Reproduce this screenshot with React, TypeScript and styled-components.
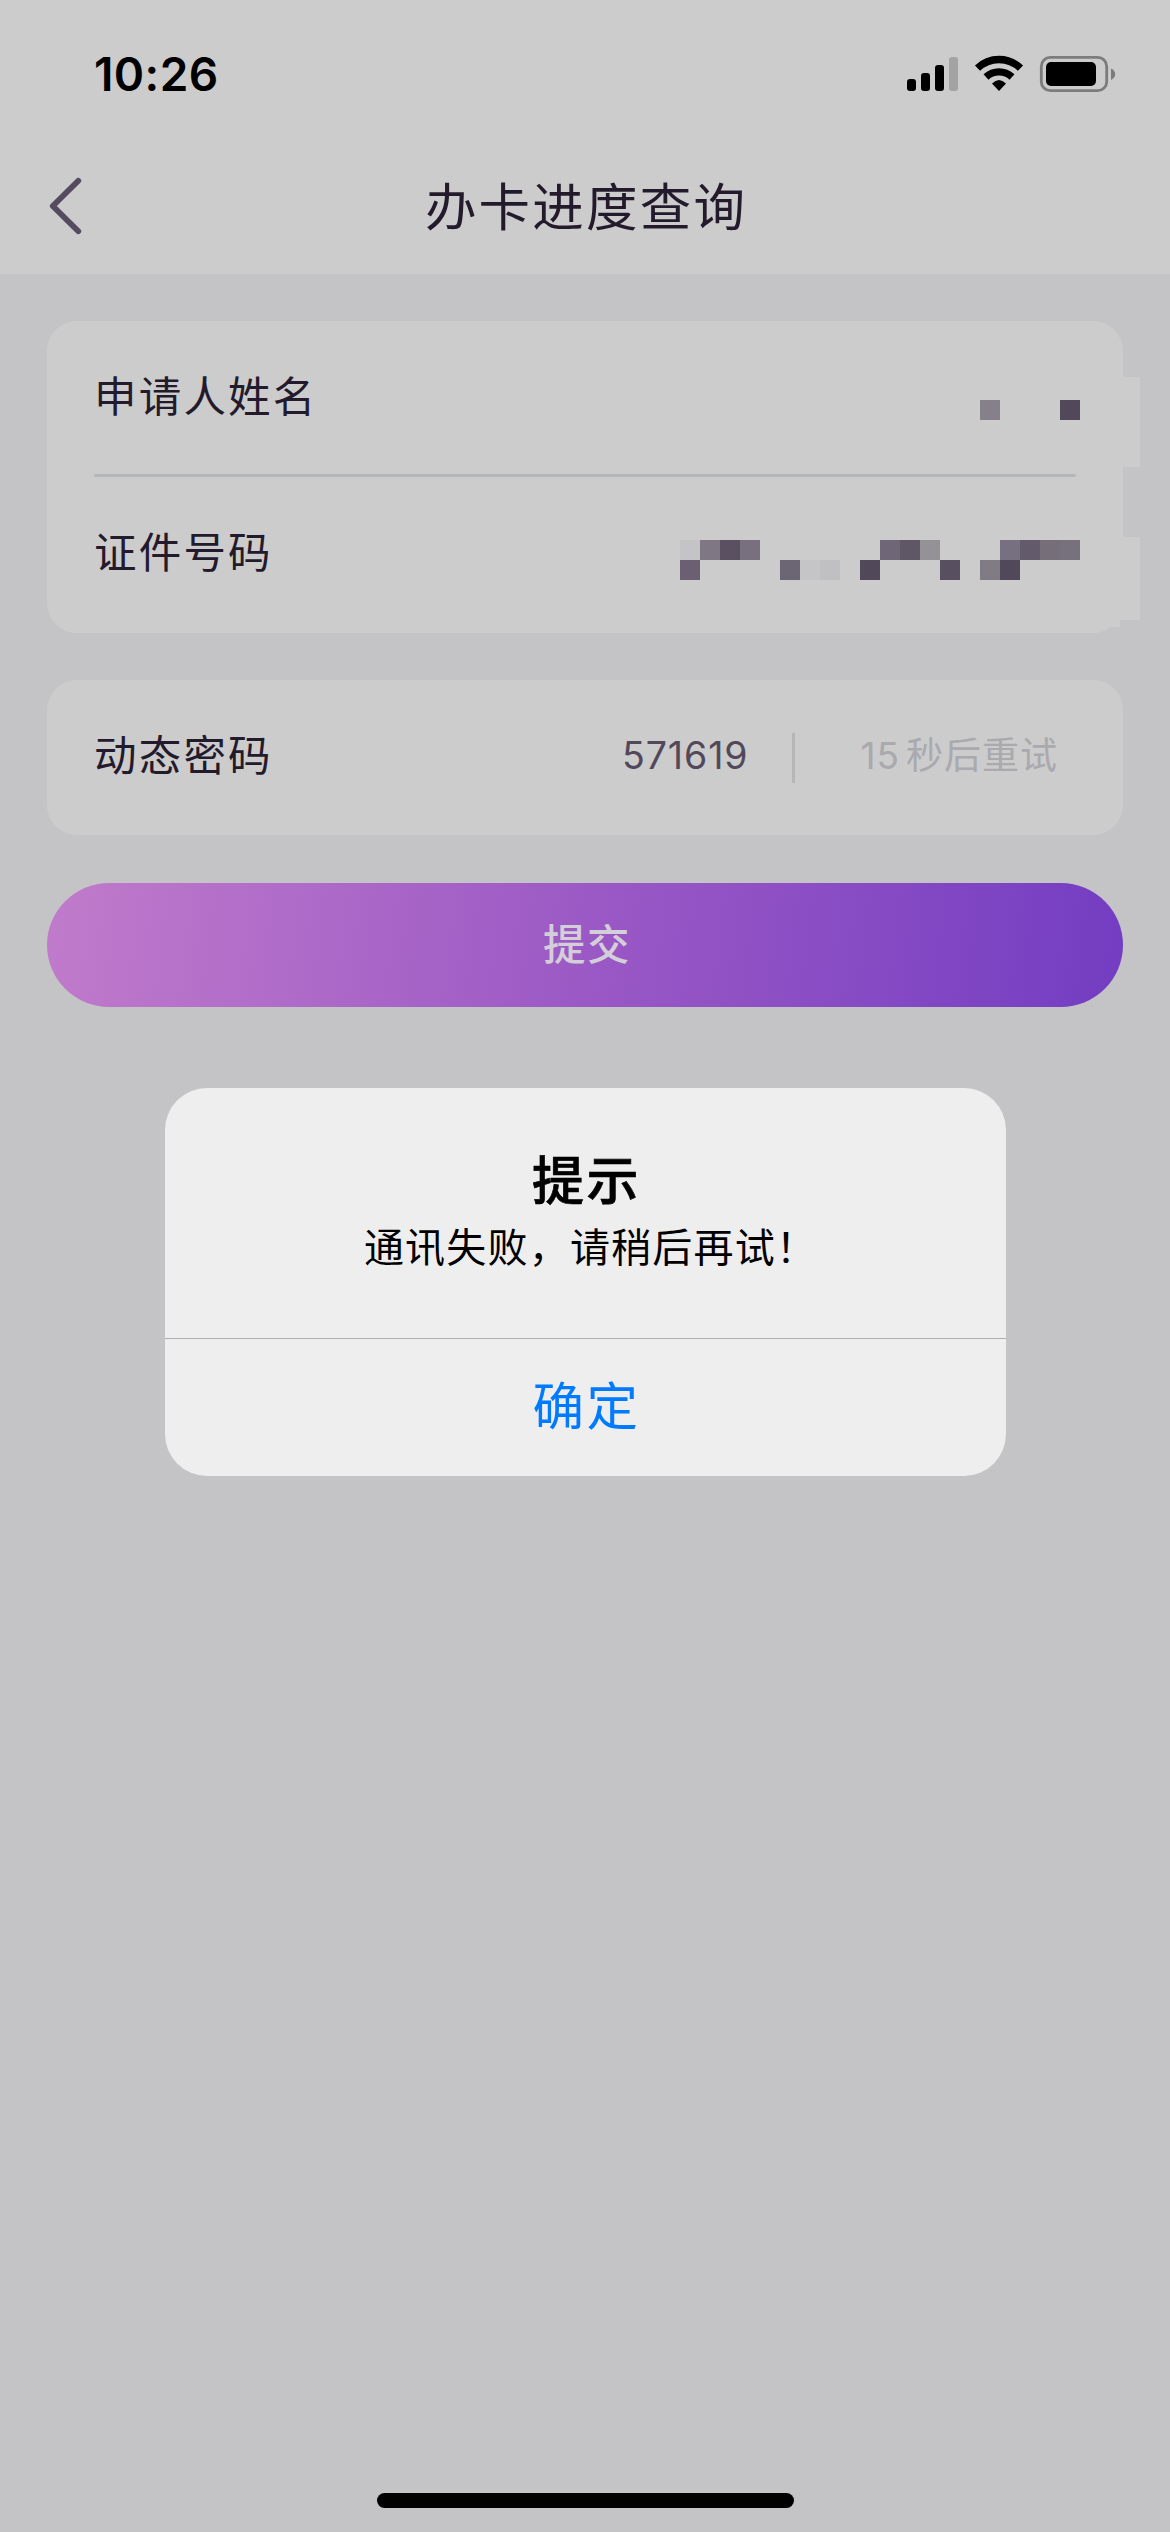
import React from "react";
import styled, { createGlobalStyle } from "styled-components";

const GlobalStyle = createGlobalStyle`
  *, *::before, *::after { box-sizing: border-box; }
  body {
    margin: 0;
    background: #c4c4c6;
    font-family: Inter, "Noto Sans CJK SC", sans-serif;
  }
  button { font-family: inherit; border: 0; padding: 0; }
`;

const Page = styled.div`
  position: relative;
  display: flex;
  flex-direction: column;
  width: 1170px;
  height: 2532px;
  overflow: hidden;
  background: #c4c4c6;
`;

const Top = styled.header`
  height: 274px;
  background: #cccccc;
`;

const StatusBar = styled.div`
  display: flex;
  justify-content: space-between;
  height: 144px;
  padding: 46px 54px 0 94px;
`;

const Time = styled.time`
  font-size: 46px;
  line-height: 56px;
  font-weight: 600;
  letter-spacing: 0.4px;
  color: #000;
`;

const StatusIcons = styled.svg`
  width: 210px;
  height: 40px;
  margin-top: 7px;
`;

const NavBar = styled.div`
  display: grid;
  grid-template-columns: 100px 1fr 100px;
  align-items: center;
  height: 124px;
`;

const BackButton = styled.button`
  display: flex;
  padding-left: 48px;
  background: none;
`;

const Title = styled.h1`
  margin: 0;
  padding: 1px 0 0 2px;
  text-align: center;
  font-size: 51.5px;
  line-height: 64px;
  font-weight: 400;
  letter-spacing: 2.2px;
  color: #231a2c;
`;

const Form = styled.main`
  display: flex;
  flex-direction: column;
  padding: 47px 47px 0;
`;

const Card = styled.section<{ $gapBelow: number }>`
  position: relative;
  margin-bottom: ${(p) => p.$gapBelow}px;
  border-radius: 30px;
  background: #cccccc;
`;

const Row = styled.div<{ $height: number; $lift: number }>`
  display: flex;
  align-items: center;
  justify-content: space-between;
  height: ${(p) => p.$height}px;
  padding: 0 43px ${(p) => p.$lift}px 47px;
`;

const Label = styled.span`
  font-size: 42.5px;
  line-height: 60px;
  letter-spacing: 2.2px;
  color: #231a2c;
`;

const Divider = styled.hr`
  height: 3px;
  margin: 0 47px;
  border: 0;
  border-radius: 2px;
  background: #b5b6b8;
`;

const Mosaic = styled.div<{ $columns: number; $shift: number }>`
  display: grid;
  grid-template-columns: repeat(${(p) => p.$columns}, 20px);
  grid-auto-rows: 20px;
  transform: translateY(${(p) => p.$shift}px);
`;

const Pixel = styled.i<{ $tone: string }>`
  background: ${(p) => p.$tone};
`;

const EdgePatch = styled.div<{ $top: number; $height: number; $right?: number }>`
  position: absolute;
  top: ${(p) => p.$top}px;
  right: ${(p) => p.$right ?? -17}px;
  width: 24px;
  height: ${(p) => p.$height}px;
  background: #cccccc;
`;

const CodeGroup = styled.div`
  display: flex;
  align-items: center;
  font-size: 37px;
  line-height: 50px;
`;

const Code = styled.span`
  font-size: 37.5px;
  color: #51495a;
  letter-spacing: 0.9px;
`;

const Bar = styled.span`
  width: 3px;
  height: 50px;
  margin: 3px 65px 0 44px;
  background: #b5b6b8;
`;

const Retry = styled.span`
  display: flex;
  gap: 6px;
  margin-right: 22px;
  letter-spacing: 1px;
  color: #a9a9ae;
`;

const Submit = styled.button`
  height: 124px;
  padding: 0 0 7px 4px;
  border-radius: 62px;
  background: linear-gradient(97deg, #c07bcb 0%, #9b59c5 50%, #733dc2 100%);
  font-size: 42.5px;
  font-weight: 500;
  letter-spacing: 1.5px;
  color: #d3ced7;
`;

const Overlay = styled.div`
  position: absolute;
  inset: 0;
  display: flex;
  align-items: flex-start;
  justify-content: center;
  padding: 1088px 0 0 1px;
`;

const Dialog = styled.div`
  width: 841px;
  height: 388px;
  border-radius: 42px;
  overflow: hidden;
  background: #eeeeef;
  text-align: center;
`;

const DialogBody = styled.div`
  display: flex;
  flex-direction: column;
  height: 251px;
  padding-top: 60px;
  border-bottom: 1px solid #adadaf;
`;

const DialogTitle = styled.h2`
  margin: 0;
  padding-left: 2px;
  font-size: 52px;
  line-height: 68px;
  font-weight: 500;
  -webkit-text-stroke: 0.7px #000;
  letter-spacing: 2.5px;
  color: #000;
`;

const DialogMessage = styled.p`
  margin: 4px 0 0;
  padding-left: 10px;
  font-size: 40px;
  line-height: 56px;
  letter-spacing: 1.2px;
  color: #000;
`;

const DialogAction = styled.button`
  width: 100%;
  height: 135px;
  padding: 0 0 9px 2px;
  background: none;
  font-size: 51.5px;
  letter-spacing: 2.5px;
  color: #007aff;
`;

const HomeIndicator = styled.div`
  width: 417px;
  height: 15px;
  margin: auto auto 24px 377px;
  border-radius: 8px;
  background: #000;
`;

const NAME_PIXELS = ["#85808a", "", "", "", "#51495a"];

const ID_PIXELS = [
  "#c4c4c6", "#7f7783", "#5a5061", "#78707e", "", "", "", "", "", "",
  "#6f6678", "#5f5666", "#949197", "", "", "", "#767080", "#635b6b", "#766e79", "#77707d",
  "#6a6072", "", "", "", "", "#6c6574", "#c5c5c7", "#c0c0c2", "", "#51495a",
  "", "", "", "#585061", "", "#817b86", "#51495a", "", "", "",
];

function Pixels({ tones, columns, shift }: { tones: string[]; columns: number; shift: number }) {
  return (
    <Mosaic $columns={columns} $shift={shift}>
      {tones.map((tone, i) => (
        <Pixel key={i} $tone={tone || "transparent"} />
      ))}
    </Mosaic>
  );
}

export default function App() {
  return (
    <Page>
      <GlobalStyle />
      <Top>
        <StatusBar>
          <Time>10:26</Time>
          <StatusIcons viewBox="906 53 210 40">
            <rect x="907" y="79" width="9" height="12" rx="3" />
            <rect x="921" y="73" width="9" height="18" rx="3" />
            <rect x="935" y="65" width="9" height="26" rx="3" />
            <rect x="949" y="57" width="9" height="34" rx="3" fill="#a3a3a3" />
            <g fill="none" stroke="#000">
              <path d="M977.5 68.2 A31 31 0 0 1 1020.5 68.2" strokeWidth="7.4" />
              <path d="M986 77 A19 19 0 0 1 1012 77" strokeWidth="7.2" />
            </g>
            <path d="M999 91 L992 83.6 Q999 76.5 1006 83.6 Z" />
            <rect x="1041.3" y="57.3" width="65.4" height="33.4" rx="9" fill="none" stroke="#7c7c7c" strokeWidth="2.8" />
            <rect x="1046" y="62" width="50" height="24" rx="5" />
            <path d="M1111 68.5 Q1115.2 70.5 1115.2 74.3 Q1115.2 78 1111 80 Z" fill="#7c7c7c" />
          </StatusIcons>
        </StatusBar>
        <NavBar>
          <BackButton aria-label="返回">
            <svg width="36" height="60" viewBox="0 0 36 60" fill="none" stroke="#554b5e" strokeWidth="5.8" strokeLinecap="round" strokeLinejoin="round">
              <path d="M30.3 4.8 L4.8 30 L30.3 55.2" />
            </svg>
          </BackButton>
          <Title>办卡进度查询</Title>
        </NavBar>
      </Top>

      <Form>
        <Card $gapBelow={47}>
          <Row $height={153} $lift={1}>
            <Label>申请人姓名</Label>
            <Pixels tones={NAME_PIXELS} columns={5} shift={13} />
          </Row>
          <Divider />
          <Row $height={156} $lift={4}>
            <Label>证件号码</Label>
            <Pixels tones={ID_PIXELS} columns={20} shift={7} />
          </Row>
          <EdgePatch $top={56} $height={90} />
          <EdgePatch $top={216} $height={83} />
          <EdgePatch $top={286} $height={20} $right={3} />
        </Card>
        <Card $gapBelow={48}>
          <Row $height={155} $lift={3}>
            <Label>动态密码</Label>
            <CodeGroup>
              <Code>571619</Code>
              <Bar />
              <Retry>
                <span>15</span>
                <span>秒后重试</span>
              </Retry>
            </CodeGroup>
          </Row>
        </Card>
        <Submit>提交</Submit>
      </Form>

      <HomeIndicator />

      <Overlay>
        <Dialog role="alertdialog">
          <DialogBody>
            <DialogTitle>提示</DialogTitle>
            <DialogMessage>通讯失败，请稍后再试！</DialogMessage>
          </DialogBody>
          <DialogAction>确定</DialogAction>
        </Dialog>
      </Overlay>
    </Page>
  );
}
